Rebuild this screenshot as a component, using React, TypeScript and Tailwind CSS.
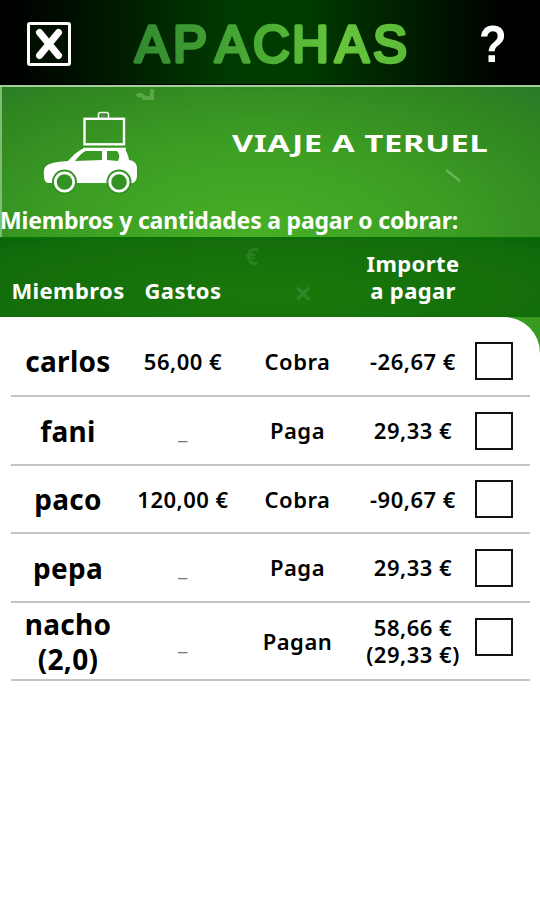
interface Member {
  name: string[]
  spent: string
  action: string
  amount: string[]
}

const members: Member[] = [
  { name: ['carlos'], spent: '56,00 €', action: 'Cobra', amount: ['-26,67 €'] },
  { name: ['fani'], spent: '_', action: 'Paga', amount: ['29,33 €'] },
  { name: ['paco'], spent: '120,00 €', action: 'Cobra', amount: ['-90,67 €'] },
  { name: ['pepa'], spent: '_', action: 'Paga', amount: ['29,33 €'] },
  { name: ['nacho', '(2,0)'], spent: '_', action: 'Pagan', amount: ['58,66 €', '(29,33 €)'] },
]

const rowHeights = ['h-[80px]', 'h-[69px]', 'h-[68px]', 'h-[69px]', 'h-[78px]']

function Logo() {
  return (
    <svg width="296" height="66" viewBox="-10 -8 296 66" className="shrink-0">
      <defs>
        <linearGradient id="logo" gradientUnits="userSpaceOnUse" x1="0" y1="0" x2="276" y2="0">
          <stop offset="0" stopColor="#318a2f" />
          <stop offset="0.5" stopColor="#4cae35" />
          <stop offset="0.75" stopColor="#66c53c" />
          <stop offset="1" stopColor="#5cbc38" />
        </linearGradient>
      </defs>
      <text
        x="4 42 84 122 161 204 242"
        y="42"
        fill="url(#logo)"
        stroke="url(#logo)"
        strokeWidth="3.500"
        strokeLinejoin="round"
        className="font-['Liberation_Sans'] text-[51px]"
      >
        APACHAS
      </text>
    </svg>
  )
}

function CarIcon() {
  return (
    <svg width="96" height="84" viewBox="0 0 96 84" fill="none" className="shrink-0">
      {/* suitcase */}
      <path d="M55.500 8v-3.500q0-2 2-2h6q2 0 2 2V8" stroke="#e8f5e4" strokeWidth="1.600" />
      <path d="M58 4.500h5V8h-5z" fill="#668064" />
      <rect x="41.500" y="8.800" width="39.500" height="25.500" stroke="#fff" strokeWidth="2.400" />
      <path d="M40 38.700h43" stroke="#fff" strokeWidth="2" />
      {/* body */}
      <path
        fillRule="evenodd"
        d="M1 66Q0 59 3 56Q7 52 25 51Q33 42 39 39H81Q84 40 86 50Q93 51 94 57V65Q94 71 90 73H5Q1 72 1 66ZM32 51L59 50V41H43Q39 42 32 51ZM64 41V50L75 51Q78 45 74 41Z"
        fill="#fff"
      />
      {[21.5, 76].map((cx) => (
        <g key={cx}>
          <circle cx={cx} cy="72" r="12.500" fill="#329322" />
          <circle cx={cx} cy="72" r="9.200" stroke="#fff" strokeWidth="2.800" />
        </g>
      ))}
    </svg>
  )
}

function TopBar() {
  return (
    <header className="flex h-[85px] items-start justify-between border-b border-black bg-[linear-gradient(90deg,#000_2%,#001c00_22%,#003a00_42%,#003c00_56%,#001d00_76%,#000_94%)] pr-[33px] pl-[27px]">
      <button className="mt-[22px] flex size-[44px] items-center justify-center rounded-[3px] border-[3px] border-white bg-[#001000]">
        <svg width="30" height="34" viewBox="0 0 30 34" stroke="#fff" strokeWidth="7" strokeLinecap="round">
          <path d="M5.500 5.500L24.500 28.500M24.500 5.500L5.500 28.500" />
        </svg>
      </button>
      <div className="mt-[12px] ml-[4px]">
        <Logo />
      </div>
      <button className="mt-[14px] ml-[14px] w-[30px] scale-x-[0.880] text-center font-['Liberation_Sans'] text-[52px] leading-[60px] font-bold text-white">
        ?
      </button>
    </header>
  )
}

export default function App() {
  return (
    <div className="flex h-[900px] w-[540px] flex-col overflow-hidden bg-white font-['Noto_Sans',sans-serif]">
      <TopBar />
      <section className="relative h-[152px] border-t-2 border-[#a5cf9c] bg-[radial-gradient(ellipse_430px_210px_at_47%_100%,#46b025_0%,#3c9e24_45%,#318620_80%,#28792a_100%)] shadow-[inset_2px_0_0_#7dbd74]">
        <div className="flex h-[119px] items-start">
          <div className="pt-[23px] pl-[43px]">
            <CarIcon />
          </div>
          <h1 className="mt-[42px] ml-[93px] w-[257px] text-[22.500px] leading-[30px] font-bold whitespace-nowrap text-white">
            <span className="inline-block origin-left scale-x-[1.450] tracking-[0.500px]">VIAJE A TERUEL</span>
          </h1>
        </div>
        <p className="text-[23px] leading-[28px] font-bold tracking-[-0.200px] whitespace-nowrap text-white">
          Miembros y cantidades a pagar o cobrar:
        </p>
        <svg width="540" height="150" viewBox="0 0 540 150" className="absolute top-0 left-0" stroke="#8ac97b" fill="none">
          <path d="M446 83l14 11" strokeWidth="2.500" opacity="0.600" />
          <path d="M137 9q5-3 7 2h8V2" strokeWidth="4" opacity="0.450" />
        </svg>
      </section>

      <div className="relative grid h-[80px] grid-cols-[114px_116px_113px_118px_43px] items-end border-t-2 border-[#087004] bg-[radial-gradient(ellipse_at_50%_70%,#1a780a,#126c0b_80%,#086609)] pb-[13px] pl-[11px] text-center text-[22px] leading-[27px] font-bold tracking-[0.400px] whitespace-nowrap text-white">
        <span>Miembros</span>
        <span>Gastos</span>
        <span />
        <span>
          Importe
          <br />a pagar
        </span>
        <span className="absolute top-[3px] left-[245px] text-[24px] text-[#368b30]/60">€</span>
        <span className="absolute top-[40px] left-[294px] text-[32px] text-[#368b30]/80">×</span>
      </div>

      <div className="flex-1 bg-[linear-gradient(#389c20_0,#389c20_60px,#fff_60px)]">
        <main className="h-full rounded-tr-[36px] bg-white pr-[10px] pl-[11px]">
          {members.map((member, i) => (
            <div
              key={member.name[0]}
              className={`${rowHeights[i]} ${i === 0 ? 'pt-[10px]' : ''} grid grid-cols-[114px_116px_113px_118px_43px] items-center border-b-2 border-[#c4c4c4] text-center text-[22px] leading-[27px] font-semibold tracking-[0.500px] whitespace-nowrap text-black`}
            >
              <span className="pt-px text-[28px] leading-[35px] font-bold tracking-[0.300px]">
                {member.name.map((line) => (
                  <span key={line} className="block">{line}</span>
                ))}
              </span>
              <span className={member.spent === '_' ? 'text-[#777]' : ''}>{member.spent}</span>
              <span>{member.action}</span>
              <span>
                {member.amount.map((line) => (
                  <span key={line} className="block">{line}</span>
                ))}
              </span>
              <span className={`size-[38px] justify-self-center border-2 border-[#111] ${member.name.length > 1 ? 'mb-[8px]' : ''}`} />
            </div>
          ))}
        </main>
      </div>
    </div>
  )
}
